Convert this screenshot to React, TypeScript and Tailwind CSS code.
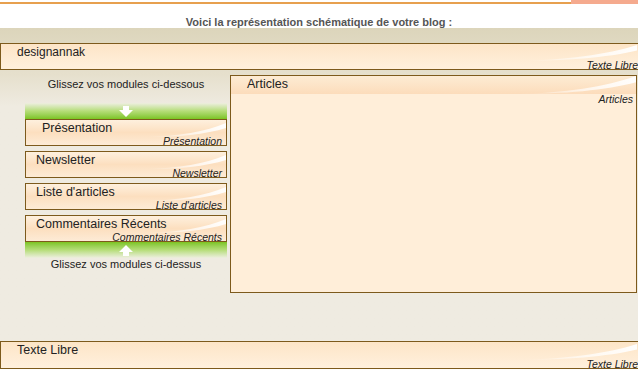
import React from 'react';

const font = { fontFamily: '"Liberation Sans", Arial, sans-serif' };

function Swoosh({ className }: { className: string }) {
  return (
    <svg className={className} viewBox="0 0 100 20" preserveAspectRatio="none">
      <defs>
        <linearGradient id="sw" x1="0" y1="0" x2="1" y2="0">
          <stop offset="0" stopColor="#ffffff" stopOpacity="0" />
          <stop offset="0.6" stopColor="#ffffff" stopOpacity="0.7" />
          <stop offset="1" stopColor="#ffffff" stopOpacity="0.95" />
        </linearGradient>
      </defs>
      <path d="M0,20 C40,19 75,12 100,0 L100,7 C75,16 40,20 0,20 Z" fill="url(#sw)" />
    </svg>
  );
}

function Arrow({ up }: { up?: boolean }) {
  return (
    <svg width="14" height="11" viewBox="0 0 14 11" className={up ? 'rotate-180' : ''}>
      <path d="M4,0 H10 V4 H14 L7,11 L0,4 H4 Z" fill="#ffffff" />
    </svg>
  );
}

function Module({ title, label, indent }: { title: string; label: string; indent?: boolean }) {
  return (
    <div className="relative h-[27px] border border-[#7d5a1c] bg-gradient-to-b from-[#fef0de] via-[#fcdfbf] to-[#fdebd6] flex flex-col justify-between overflow-hidden">
      <Swoosh className="absolute right-0 top-[3px] w-[80px] h-[14px]" />
      <div className={`relative text-[12.5px] leading-[14px] text-[#222] pt-[1px] ${indent ? 'pl-[16px]' : 'pl-[10px]'}`}>{title}</div>
      <div className="relative text-[10.5px] leading-[10px] italic text-[#222] text-right pr-[4px] mb-[-1px]">{label}</div>
    </div>
  );
}

function GreenBar({ up }: { up?: boolean }) {
  return (
    <div
      className={`h-[16px] flex items-center justify-center ${
        up ? 'bg-gradient-to-b from-[#7cc41c] via-[#b6dd78] to-[#eeeedf]' : 'bg-gradient-to-b from-[#eeeedf] via-[#b6dd78] to-[#7cc41c]'
      }`}
    >
      <Arrow up={up} />
    </div>
  );
}

export default function App() {
  return (
    <div className="w-[638px] h-[369px] overflow-hidden bg-white text-[#222]" style={font}>
      {/* top strip */}
      <div className="flex h-[4px]">
        <div className="flex-1 border-b-2 border-[#e7a04f]" />
        <div className="w-[67px] bg-[#f5aa8e]" />
      </div>
      <div className="h-[24px] flex items-end justify-center text-[11px] leading-[12px] font-bold text-[#555]">
        Voici la représentation schématique de votre blog :
      </div>

      <div className="bg-gradient-to-b from-[#dcd5bb] via-[#e6e0cd] via-[15%] to-[#efebe1] to-[25%] h-[313px] pt-[15px]">
        {/* header box */}
        <div className="relative w-[645px] h-[27px] border border-[#7d5a1c] bg-gradient-to-b from-[#fde5c7] to-[#fff0dd] flex flex-col justify-between overflow-hidden">
          <Swoosh className="absolute right-[7px] top-[1px] w-[120px] h-[16px]" />
          <div className="relative pl-[16px] pt-[1px] text-[12px] leading-[14px]">designannak</div>
          <div className="relative pr-[6px] text-right text-[10.5px] leading-[10px] italic mb-[-1px]">Texte Libre</div>
        </div>

        <div className="flex mt-[5px] gap-[3px] pl-[25px]">
          {/* left column */}
          <div className="w-[202px] flex flex-col">
            <div className="h-[28px] pt-[2px] text-center text-[11px] leading-[14px]">Glissez vos modules ci-dessous</div>
            <GreenBar />
            <div className="flex flex-col gap-[5px]">
              <Module title="Présentation" label="Présentation" indent />
              <Module title="Newsletter" label="Newsletter" />
              <Module title="Liste d'articles" label="Liste d'articles" />
              <Module title="Commentaires Récents" label="Commentaires Récents" />
            </div>
            <GreenBar up />
            <div className="text-center text-[11px] leading-[12px]">Glissez vos modules ci-dessus</div>
          </div>

          {/* articles */}
          <div className="relative w-[407px] h-[218px] border border-[#7d5a1c] bg-[#ffeed9] overflow-hidden">
            <div className="relative h-[18px] bg-gradient-to-b from-[#fdecd4] to-[#fcdcbb]">
              <Swoosh className="absolute right-0 top-0 w-[120px] h-[18px]" />
              <div className="relative pl-[16px] pt-[1px] text-[12.5px] leading-[14px]">Articles</div>
            </div>
            <div className="text-right pr-[3px] text-[10.5px] leading-[11px] italic">Articles</div>
          </div>
        </div>
      </div>

      {/* bottom box */}
      <div className="relative w-[645px] h-[28px] border border-[#7d5a1c] bg-gradient-to-b from-[#fde5c7] to-[#fff0dd] flex flex-col justify-between overflow-hidden">
        <Swoosh className="absolute right-[7px] top-[2px] w-[120px] h-[16px]" />
        <div className="relative pl-[16px] pt-[1px] text-[12.5px] leading-[14px]">Texte Libre</div>
        <div className="relative pr-[6px] text-right text-[10.5px] leading-[10px] italic mb-[-1px]">Texte Libre</div>
      </div>
    </div>
  );
}
